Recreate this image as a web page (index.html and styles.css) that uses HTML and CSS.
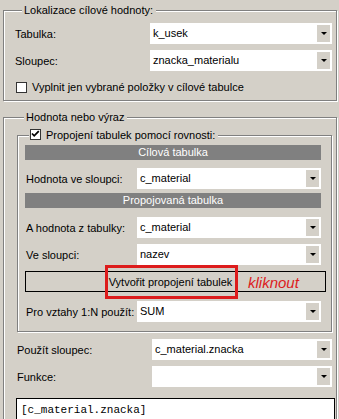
FILE: index.html
```html
<!DOCTYPE html>
<html lang="cs">

<head>
  <meta charset="UTF-8" />
  <title>Lokalizace cílové hodnoty</title>
  <link rel="stylesheet" href="styles.css">
</head>

<body>
  <div class="panel">
    <!-- cilova hodnota -->
    <fieldset class="group group-target">
      <legend>Lokalizace cílové hodnoty:</legend>
      <div class="field">
        <span class="label">Tabulka:</span>
        <div class="combo"><span class="value">k_usek</span><span class="arrow"></span></div>
      </div>
      <div class="field">
        <span class="label">Sloupec:</span>
        <div class="combo"><span class="value">znacka_materialu</span><span class="arrow"></span></div>
      </div>
      <div class="check-row">
        <span class="checkbox"></span>
        <span>Vyplnit jen vybrané položky v cílové tabulce</span>
      </div>
    </fieldset>

    <!-- hodnota nebo vyraz -->
    <fieldset class="group group-value">
      <legend>Hodnota nebo výraz</legend>

      <fieldset class="join">
        <legend><span class="checkbox checked"><svg width="9" height="9" viewBox="0 0 9 9"><polyline points="1,3.5 3.2,5.8 7.8,1.2" fill="none" stroke="#000" stroke-width="1.8" /></svg></span>Propojení tabulek pomocí rovnosti:</legend>

        <div class="bar">Cílová tabulka</div>
        <div class="field field-bar">
          <span class="label">Hodnota ve sloupci:</span>
          <div class="combo"><span class="value">c_material</span><span class="arrow"></span></div>
        </div>

        <div class="bar bar-join">Propojovaná tabulka</div>
        <div class="field field-bar">
          <span class="label">A hodnota z tabulky:</span>
          <div class="combo"><span class="value">c_material</span><span class="arrow"></span></div>
        </div>
        <div class="field">
          <span class="label">Ve sloupci:</span>
          <div class="combo"><span class="value">nazev</span><span class="arrow"></span></div>
        </div>

        <div class="btn-wrap">
          <button class="btn">Vytvořit propojení tabulek</button>
          <span class="callout"></span>
          <span class="note">kliknout</span>
        </div>

        <div class="field field-rel">
          <span class="label">Pro vztahy 1:N použít:</span>
          <div class="combo"><span class="value">SUM</span><span class="arrow"></span></div>
        </div>
      </fieldset>

      <div class="field field-use">
        <span class="label">Použít sloupec:</span>
        <div class="combo"><span class="value">c_material.znacka</span><span class="arrow"></span></div>
      </div>
      <div class="field">
        <span class="label">Funkce:</span>
        <div class="combo"><span class="value"></span><span class="arrow"></span></div>
      </div>

      <div class="expr">[c_material.znacka]</div>
    </fieldset>
  </div>
</body>

</html>
```

FILE: styles.css
```css
* {
  box-sizing: border-box;
}

body {
  margin: 0;
  width: 339px;
  height: 419px;
  overflow: hidden;
  background: #d4d0c8;
  font: 11px/14px "Liberation Sans", Arial, sans-serif;
  color: #000;
}

.panel {
  padding: 3px 2px 0 3px;
}

/* skupiny - vyryty ramecek */
fieldset {
  margin: 0;
  padding: 0;
  min-width: 0;
  border: 1px solid #808080;
  box-shadow: inset 1px 1px 0 #fff, 1px 1px 0 #fff;
}

legend {
  margin-left: 7px;
  padding: 0 3px 0 2px;
  line-height: 15px;
  background: #d4d0c8;
}

.group-target {
  padding: 0 4px 5px 11px;
}

.group-target .field:first-of-type {
  margin-top: 5px;
}

.group-value {
  margin-top: 9px;
  padding: 0 4px 0 13px;
  height: 320px;
}

/* radky s popiskem a vyberem */
.field {
  display: flex;
  align-items: center;
  height: 21px;
  margin-top: 6px;
}

.label {
  flex: none;
  width: 135px;
}

.combo {
  flex: 1;
  display: flex;
  height: 21px;
  padding: 2px;
  background: #fff;
}

.value {
  flex: 1;
  padding-left: 1px;
  line-height: 17px;
  white-space: nowrap;
}

.arrow {
  flex: none;
  width: 13px;
  display: flex;
  align-items: center;
  justify-content: center;
  background: #d4d0c8;
}

.arrow::after {
  content: "";
  border-left: 3px solid transparent;
  border-right: 3px solid transparent;
  border-top: 3px solid #000;
}

.check-row {
  display: flex;
  align-items: center;
  gap: 5px;
  height: 16px;
  margin-top: 8px;
  padding-left: 1px;
}

.checkbox {
  flex: none;
  display: inline-block;
  width: 11px;
  height: 11px;
  background: #fff;
  border: 1px solid #333;
}

.checkbox svg {
  display: block;
}

/* propojeni tabulek */
.join {
  margin-top: 3px;
  padding: 0 10px 9px 7px;
}

.join legend {
  margin-left: 4px;
  padding: 0 3px 0 1px;
}

.join legend .checkbox {
  margin-right: 5px;
  vertical-align: -1px;
}

.join .label {
  width: 112px;
  padding-left: 1px;
}

.bar {
  height: 15px;
  margin-top: 2px;
  background: #808080;
  color: #fff;
  text-align: center;
  line-height: 15px;
}

.bar-join {
  margin-top: 4px;
}

.field-bar {
  margin-top: 8px;
}

.bar-join + .field-bar {
  margin-top: 9px;
}

.btn-wrap {
  position: relative;
  margin: 6px -5px 0 0;
}

.btn {
  display: block;
  width: 100%;
  height: 21px;
  margin: 0;
  padding: 0 10px 0 0;
  border: 1px solid #000;
  background: #d4d0c8;
  font: inherit;
  color: #000;
  text-align: center;
}

.callout {
  position: absolute;
  left: 80px;
  top: -6px;
  width: 133px;
  height: 34px;
  border: 3px solid #dd1c1c;
}

.note {
  position: absolute;
  left: 223px;
  top: 3px;
  font-size: 15px;
  font-style: italic;
  line-height: 17px;
  color: #dd1c1c;
}

.field-rel {
  margin-top: 9px;
}

.field-use {
  margin-top: 7px;
}

.expr {
  height: 40px;
  margin: 11px -3px 0 -1px;
  padding: 5px 4px 0;
  border: 1px solid #000;
  background: #fff;
  font: 11px/13px "Liberation Mono", "Courier New", monospace;
}
```
